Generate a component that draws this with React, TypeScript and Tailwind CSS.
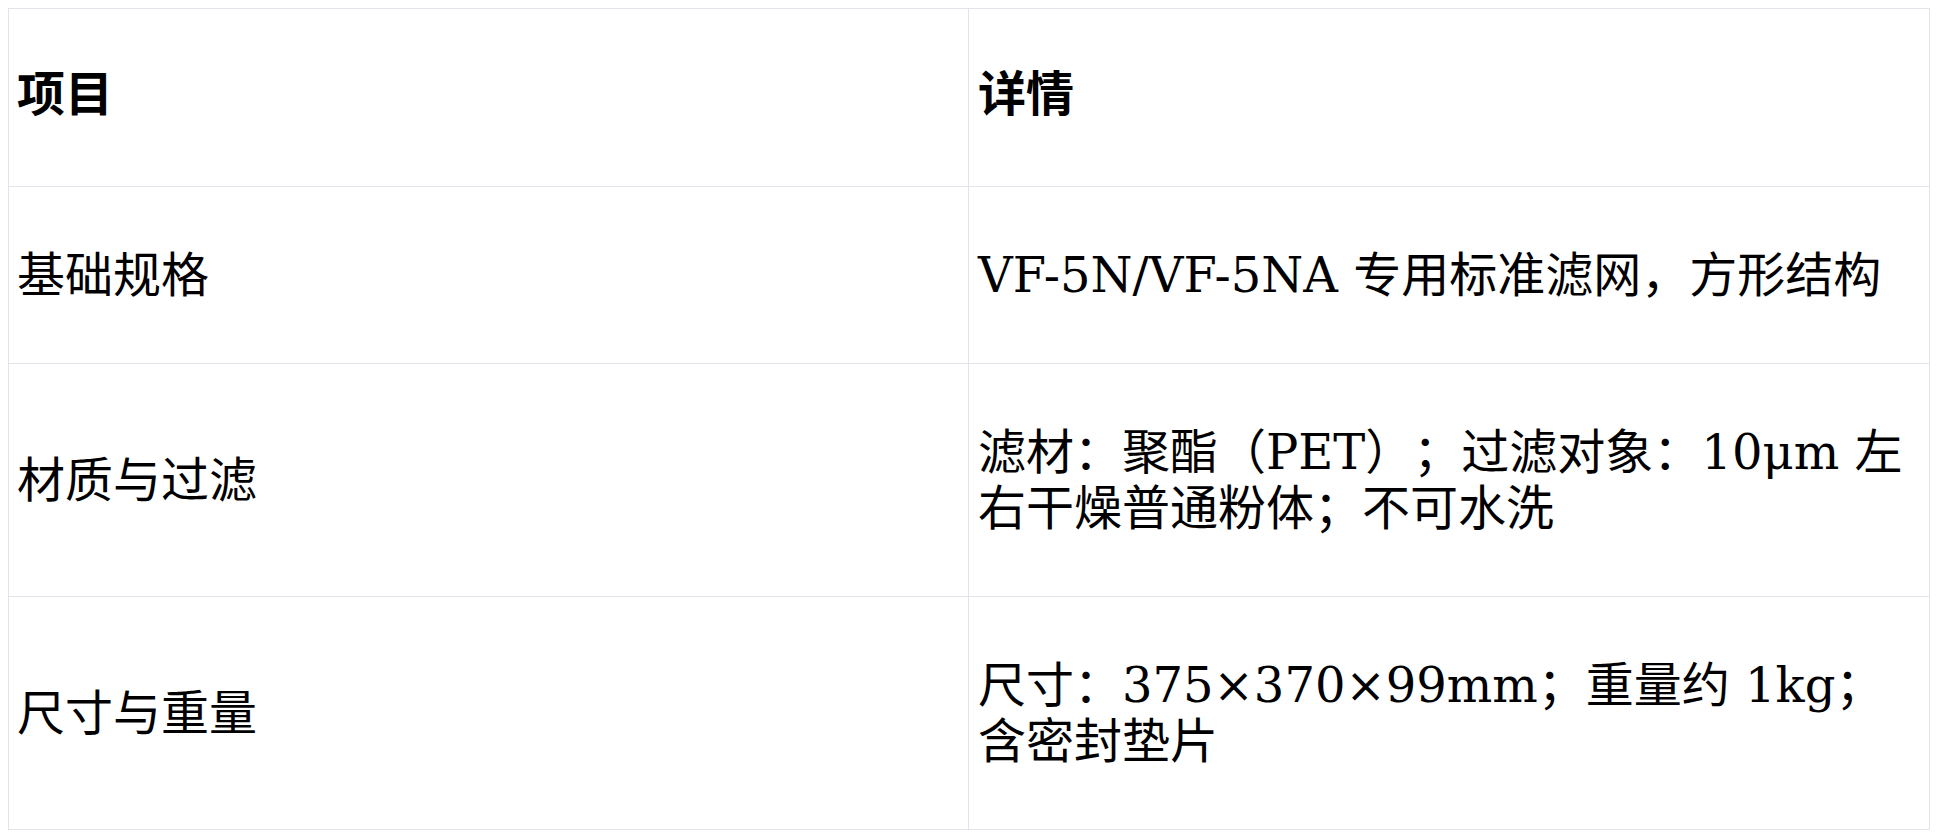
import React from "react";

const rows: [string, string][] = [
  ["基础规格", "VF-5N/VF-5NA 专用标准滤网，方形结构"],
  ["材质与过滤", "滤材：聚酯（PET）；过滤对象：10μm 左右干燥普通粉体；不可水洗"],
  ["尺寸与重量", "尺寸：375×370×99mm；重量约 1kg；含密封垫片"],
];

export default function App() {
  return (
    <div className="bg-white min-h-[837px] p-2 text-black [text-spacing-trim:space-all]" style={{ fontFamily: '"DejaVu Serif", "Noto Sans CJK SC", serif' }}>
      <table className="w-[1921px] border-collapse table-fixed text-[48px] leading-[56px]">
        <colgroup>
          <col className="w-[960px]" />
          <col className="w-[961px]" />
        </colgroup>
        <thead>
          <tr>
            <th className="border border-[#e3e3ec] text-left font-bold px-[8px] pt-[57px] pb-[64px] align-middle">项目</th>
            <th className="border border-[#e3e3ec] text-left font-bold px-[9px] pt-[57px] pb-[64px] align-middle">详情</th>
          </tr>
        </thead>
        <tbody>
          {rows.map(([a, b]) => (
            <tr key={a}>
              <td className="border border-[#e3e3ec] px-[8px] py-[60px] align-middle">{a}</td>
              <td className="border border-[#e3e3ec] px-[9px] py-[60px] align-middle">{b}</td>
            </tr>
          ))}
        </tbody>
      </table>
    </div>
  );
}
